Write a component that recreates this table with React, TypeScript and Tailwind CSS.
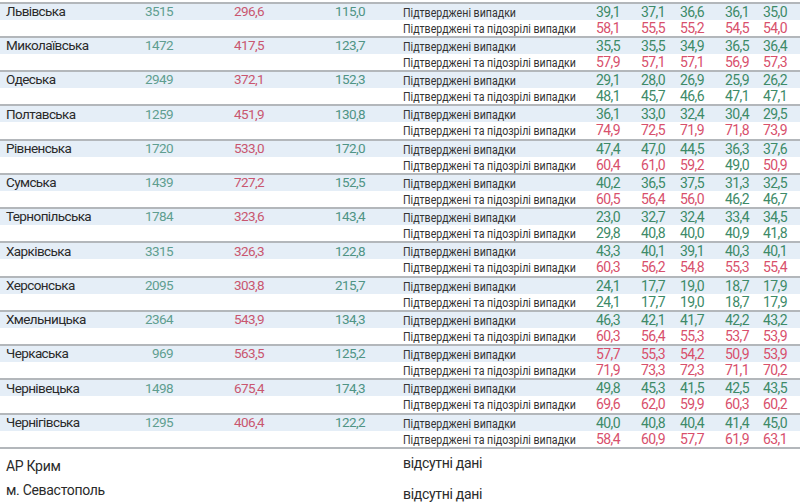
import React from "react";

type Row = { name: string; a: string; b: string; c: string; v1: string[]; v2: string[] };

const rows: Row[] = [
  { name: "Львівська", a: "3515", b: "296,6", c: "115,0", v1: ["39,1", "37,1", "36,6", "36,1", "35,0"], v2: ["58,1", "55,5", "55,2", "54,5", "54,0"] },
  { name: "Миколаївська", a: "1472", b: "417,5", c: "123,7", v1: ["35,5", "35,5", "34,9", "36,5", "36,4"], v2: ["57,9", "57,1", "57,1", "56,9", "57,3"] },
  { name: "Одеська", a: "2949", b: "372,1", c: "152,3", v1: ["29,1", "28,0", "26,9", "25,9", "26,2"], v2: ["48,1", "45,7", "46,6", "47,1", "47,1"] },
  { name: "Полтавська", a: "1259", b: "451,9", c: "130,8", v1: ["36,1", "33,0", "32,4", "30,4", "29,5"], v2: ["74,9", "72,5", "71,9", "71,8", "73,9"] },
  { name: "Рівненська", a: "1720", b: "533,0", c: "172,0", v1: ["47,4", "47,0", "44,5", "36,3", "37,6"], v2: ["60,4", "61,0", "59,2", "49,0", "50,9"] },
  { name: "Сумська", a: "1439", b: "727,2", c: "152,5", v1: ["40,2", "36,5", "37,5", "31,3", "32,5"], v2: ["60,5", "56,4", "56,0", "46,2", "46,7"] },
  { name: "Тернопільська", a: "1784", b: "323,6", c: "143,4", v1: ["23,0", "32,7", "32,4", "33,4", "34,5"], v2: ["29,8", "40,8", "40,0", "40,9", "41,8"] },
  { name: "Харківська", a: "3315", b: "326,3", c: "122,8", v1: ["43,3", "40,1", "39,1", "40,3", "40,1"], v2: ["60,3", "56,2", "54,8", "55,3", "55,4"] },
  { name: "Херсонська", a: "2095", b: "303,8", c: "215,7", v1: ["24,1", "17,7", "19,0", "18,7", "17,9"], v2: ["24,1", "17,7", "19,0", "18,7", "17,9"] },
  { name: "Хмельницька", a: "2364", b: "543,9", c: "134,3", v1: ["46,3", "42,1", "41,7", "42,2", "43,2"], v2: ["60,3", "56,4", "55,3", "53,7", "53,9"] },
  { name: "Черкаська", a: "969", b: "563,5", c: "125,2", v1: ["57,7", "55,3", "54,2", "50,9", "53,9"], v2: ["71,9", "73,3", "72,3", "71,1", "70,2"] },
  { name: "Чернівецька", a: "1498", b: "675,4", c: "174,3", v1: ["49,8", "45,3", "41,5", "42,5", "43,5"], v2: ["69,6", "62,0", "59,9", "60,3", "60,2"] },
  { name: "Чернігівська", a: "1295", b: "406,4", c: "122,2", v1: ["40,0", "40,8", "40,4", "41,4", "45,0"], v2: ["58,4", "60,9", "57,7", "61,9", "63,1"] },
];

const valWidths = ["w-[44px]", "w-[45px]", "w-[39px]", "w-[45px]", "w-[38px]"];

function color(v: string) {
  const n = parseFloat(v.replace(",", "."));
  return n >= 50 ? "text-[#d8506c]" : "text-[#3d8a68]";
}

function Values({ vals }: { vals: string[] }) {
  return (
    <div className="flex shrink-0">
      {vals.map((v, i) => (
        <div key={i} className={`${valWidths[i]} shrink-0 text-right pr-1 text-[14px] tracking-[-0.6px] ${color(v)}`}>
          {v}
        </div>
      ))}
    </div>
  );
}

function Label({ text }: { text: string }) {
  return (
    <div className="w-[180px] shrink-0 pl-[3px] whitespace-nowrap">
      <span className="inline-block origin-left scale-x-[0.85] text-[12.5px] text-[#333]">{text}</span>
    </div>
  );
}

function Block({ r }: { r: Row }) {
  return (
    <div className="border-t-2 border-[#b3b7bb]">
      <div className="flex h-[16px] items-center bg-[#e5eef7]">
        <div className="w-[100px] shrink-0 pl-[6px] text-[13.5px] text-[#2a2a2a] tracking-[-0.6px] whitespace-nowrap">{r.name}</div>
        <div className="w-[77px] shrink-0 text-right pr-1 text-[13.5px] text-[#5f9e90] tracking-[-0.6px]">{r.a}</div>
        <div className="w-[91px] shrink-0 text-right pr-1 text-[13.5px] text-[#c9566f] tracking-[-0.6px]">{r.b}</div>
        <div className="w-[101px] shrink-0 text-right pr-1 text-[13.5px] text-[#4f9485] tracking-[-0.6px]">{r.c}</div>
        <div className="w-[31px] shrink-0" />
        <Label text="Підтверджені випадки" />
        <Values vals={r.v1} />
      </div>
      <div className="flex h-[16.25px] items-center bg-white">
        <div className="w-[400px] shrink-0" />
        <Label text="Підтверджені та підозрілі випадки" />
        <Values vals={r.v2} />
      </div>
    </div>
  );
}

export default function App() {
  return (
    <div className="w-[800px] h-[504px] overflow-hidden bg-white leading-none" style={{ fontFamily: "Roboto, 'Noto Sans', sans-serif" }}>
      <div className="h-[1.5px]" />
      {rows.map((r) => (
        <Block key={r.name} r={r} />
      ))}
      <div className="border-t-2 border-[#b3b7bb] flex">
        <div className="w-[400px] shrink-0 pl-[6px] text-[14px] text-[#2a2a2a] tracking-[-0.3px]">
          <div className="pt-[10px]">АР Крим</div>
          <div className="pt-[10px]">м. Севастополь</div>
        </div>
        <div className="pl-[3px] text-[14px] text-[#2a2a2a] tracking-[-0.3px]">
          <div className="pt-[7px]">відсутні дані</div>
          <div className="pt-[17px]">відсутні дані</div>
        </div>
      </div>
    </div>
  );
}
